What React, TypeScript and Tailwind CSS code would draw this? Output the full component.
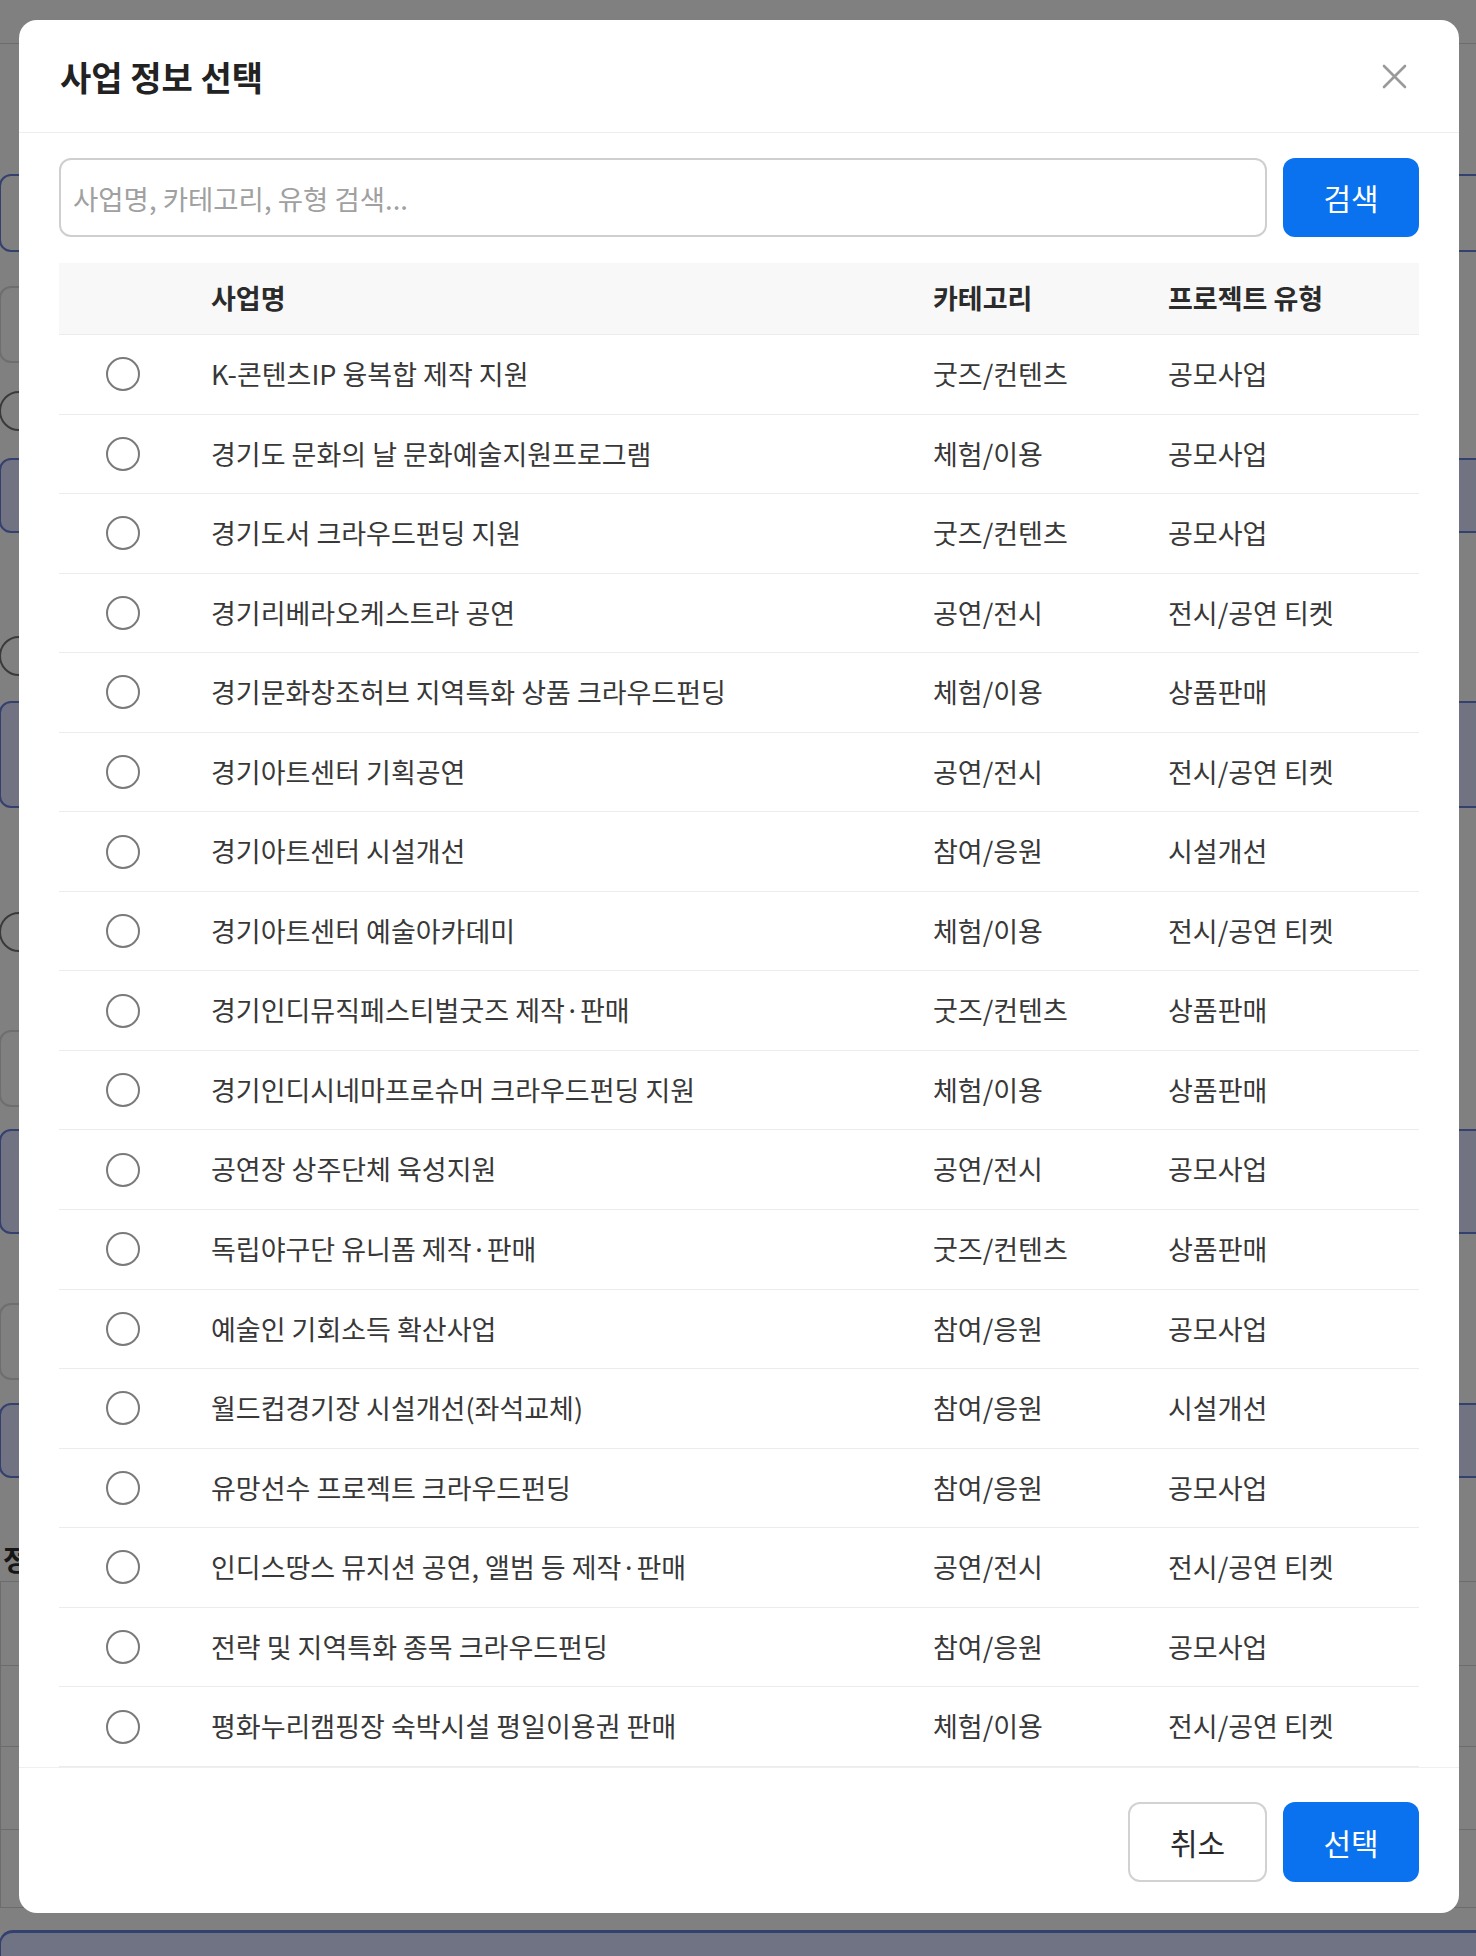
import React from 'react';

interface Project {
  name: string;
  category: string;
  type: string;
}

const projects: Project[] = [
  { name: 'K-콘텐츠IP 융복합 제작 지원', category: '굿즈/컨텐츠', type: '공모사업' },
  { name: '경기도 문화의 날 문화예술지원프로그램', category: '체험/이용', type: '공모사업' },
  { name: '경기도서 크라우드펀딩 지원', category: '굿즈/컨텐츠', type: '공모사업' },
  { name: '경기리베라오케스트라 공연', category: '공연/전시', type: '전시/공연 티켓' },
  { name: '경기문화창조허브 지역특화 상품 크라우드펀딩', category: '체험/이용', type: '상품판매' },
  { name: '경기아트센터 기획공연', category: '공연/전시', type: '전시/공연 티켓' },
  { name: '경기아트센터 시설개선', category: '참여/응원', type: '시설개선' },
  { name: '경기아트센터 예술아카데미', category: '체험/이용', type: '전시/공연 티켓' },
  { name: '경기인디뮤직페스티벌굿즈 제작·판매', category: '굿즈/컨텐츠', type: '상품판매' },
  { name: '경기인디시네마프로슈머 크라우드펀딩 지원', category: '체험/이용', type: '상품판매' },
  { name: '공연장 상주단체 육성지원', category: '공연/전시', type: '공모사업' },
  { name: '독립야구단 유니폼 제작·판매', category: '굿즈/컨텐츠', type: '상품판매' },
  { name: '예술인 기회소득 확산사업', category: '참여/응원', type: '공모사업' },
  { name: '월드컵경기장 시설개선(좌석교체)', category: '참여/응원', type: '시설개선' },
  { name: '유망선수 프로젝트 크라우드펀딩', category: '참여/응원', type: '공모사업' },
  { name: '인디스땅스 뮤지션 공연, 앨범 등 제작·판매', category: '공연/전시', type: '전시/공연 티켓' },
  { name: '전략 및 지역특화 종목 크라우드펀딩', category: '참여/응원', type: '공모사업' },
  { name: '평화누리캠핑장 숙박시설 평일이용권 판매', category: '체험/이용', type: '전시/공연 티켓' },
];

// dimmed page that sits behind the modal
const BackgroundPage: React.FC = () => {
  return (
    <div className="w-[1520px] -ml-[1px]">
      <div className="h-[44px] border-b border-[#6c6c6c]" />
      <div className="mt-[130px] h-[78px] rounded-[12px] border-2 border-[#34406e]" />
      <div className="mt-[34px] h-[77px] w-[600px] rounded-[12px] border-2 border-[#6e6e6e]" />
      <div className="mt-[28px] h-[40px] w-[40px] rounded-full border-2 border-[#3a3a3a]" />
      <div className="mt-[27px] h-[75px] rounded-[12px] border-2 border-[#34406e] bg-[#717383]" />
      <div className="mt-[103px] h-[40px] w-[40px] rounded-full border-2 border-[#3a3a3a]" />
      <div className="mt-[25px] h-[107px] rounded-[12px] border-2 border-[#34406e] bg-[#717383]" />
      <div className="mt-[104px] h-[40px] w-[40px] rounded-full border-2 border-[#3a3a3a]" />
      <div className="mt-[78px] h-[77px] w-[600px] rounded-[12px] border-2 border-[#6e6e6e]" />
      <div className="mt-[22px] h-[105px] rounded-[12px] border-2 border-[#34406e] bg-[#717383]" />
      <div className="mt-[69px] h-[77px] w-[600px] rounded-[12px] border-2 border-[#6e6e6e]" />
      <div className="mt-[23px] h-[75px] rounded-[12px] border-2 border-[#34406e] bg-[#717383]" />
      <div className="mt-[65px] h-[32px] pl-[4px] text-[28px] leading-[32px] font-bold text-[#151515]">정보</div>
      <div className="mt-[6px] border-l-2 border-[#6c6c6c]">
        <div className="h-[84px] border-t border-[#6c6c6c]" />
        <div className="h-[81px] border-t border-[#6c6c6c]" />
        <div className="h-[83px] border-t border-[#6c6c6c]" />
        <div className="h-[79px] border-t border-b border-[#6c6c6c]" />
      </div>
      <div className="mt-[22px] h-[60px] rounded-tl-[14px] border-t-[3px] border-l-2 border-[#34406e] bg-[#707383]" />
    </div>
  );
};

const Radio: React.FC = () => (
  <span className="block h-[34px] w-[34px] rounded-full border-2 border-[#7a7a7a] bg-white" />
);

export default function App() {
  return (
    <div className="relative h-[1956px] w-full overflow-hidden bg-[#808080] font-['Noto_Sans_CJK_KR','Noto_Sans',sans-serif]">
      <BackgroundPage />

      {/* modal */}
      <div className="absolute left-[19px] top-[20px] flex h-[1893px] w-[1440px] flex-col overflow-hidden rounded-[18px] bg-white">
        <div className="flex h-[113px] shrink-0 items-center justify-between border-b border-[#ededed] pl-[41px] pr-[52px]">
          <h2 className="text-[34px] font-bold text-[#222222]">사업 정보 선택</h2>
          <svg width="25" height="25" viewBox="0 0 25 25" fill="none" stroke="#9a9a9a" strokeWidth="2.6" strokeLinecap="round">
            <path d="M2 2 L23 23" />
            <path d="M23 2 L2 23" />
          </svg>
        </div>

        <div className="flex-1 overflow-hidden px-[40px] pt-[25px]">
          <div className="flex gap-[16px]">
            <input
              className="h-[79px] flex-1 rounded-[12px] border-2 border-[#cfcfcf] pl-[12px] text-[27.5px] text-[#333] outline-none placeholder:text-[#a0a0a0]"
              placeholder="사업명, 카테고리, 유형 검색..."
            />
            <button className="h-[79px] w-[136px] rounded-[12px] bg-[#0a72ef] text-[30px] text-white">검색</button>
          </div>

          <div className="mt-[26px]">
            <div className="grid h-[72px] grid-cols-[128px_722px_235px_275px] items-center border-b border-[#ececec] bg-[#f8f8f8] text-[27px] font-semibold text-[#2b2b2b]">
              <div />
              <div className="pl-[24px]">사업명</div>
              <div className="pl-[24px]">카테고리</div>
              <div className="pl-[24px]">프로젝트 유형</div>
            </div>
            {projects.map((p) => (
              <div
                key={p.name}
                className="grid h-[79.55px] grid-cols-[128px_722px_235px_275px] items-center border-b border-[#ececec] text-[27px] text-[#383838]"
              >
                <div className="flex justify-center">
                  <Radio />
                </div>
                <div className="pl-[24px]">{p.name}</div>
                <div className="pl-[24px]">{p.category}</div>
                <div className="pl-[24px]">{p.type}</div>
              </div>
            ))}
          </div>
        </div>

        <div className="flex h-[146px] shrink-0 justify-end gap-[16px] border-t border-[#efefef] pr-[40px] pt-[34px]">
          <button className="h-[80px] w-[139px] rounded-[12px] border-2 border-[#d2d2d2] bg-white text-[30px] text-[#2b2b2b]">취소</button>
          <button className="h-[80px] w-[136px] rounded-[12px] bg-[#0a72ef] text-[30px] text-white">선택</button>
        </div>
      </div>
    </div>
  );
}
